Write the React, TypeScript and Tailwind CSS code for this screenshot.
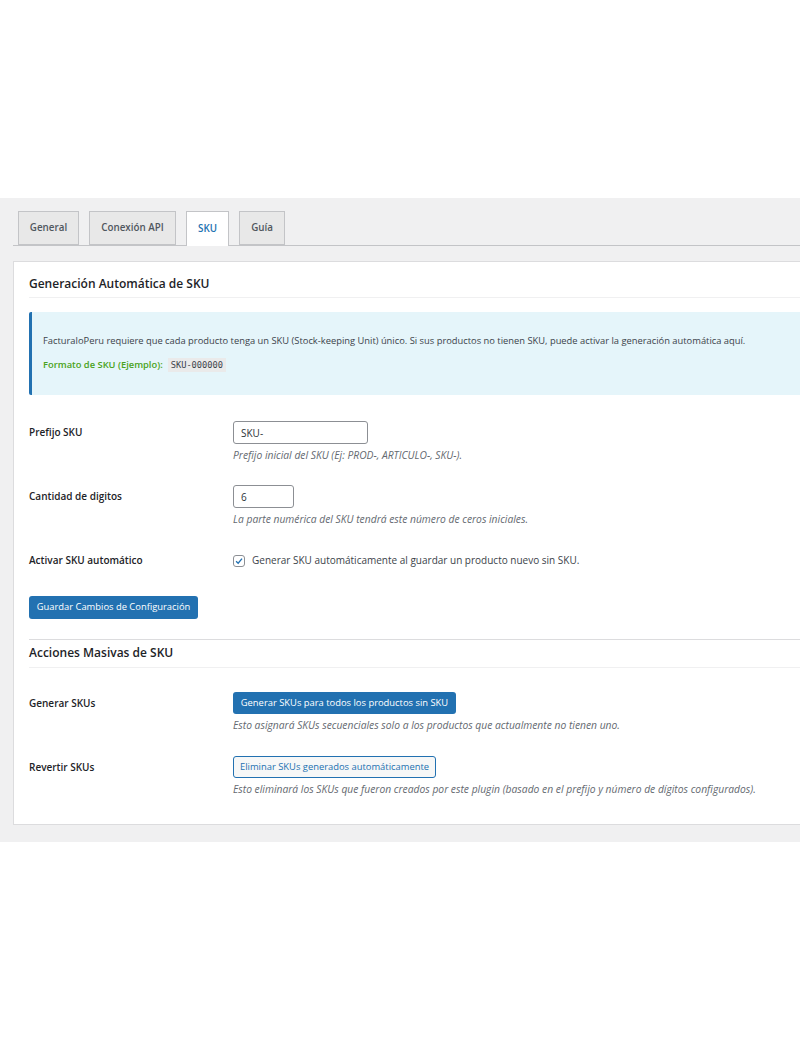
import { useState } from "react";

const tabs = [
  { name: "General", w: "w-[61px]" },
  { name: "Conexión API", w: "w-[87px]" },
  { name: "SKU", w: "w-[43px]" },
  { name: "Guía", w: "w-[46px]" },
];

function Row({ label, children }: { label: string; children: React.ReactNode }) {
  return (
    <div className="flex">
      <div className="w-[204px] shrink-0 h-[23px] flex items-center font-semibold text-[#1d2327]">{label}</div>
      <div className="flex flex-col items-start">{children}</div>
    </div>
  );
}

function Hint({ children }: { children: React.ReactNode }) {
  return <p className="mt-[4px] leading-[14px] italic text-[10.3px] text-[#646970]">{children}</p>;
}

export default function App() {
  const [auto, setAuto] = useState(true);

  return (
    <div className="w-[800px] overflow-hidden bg-white font-['Open_Sans',sans-serif] text-[10px] text-[#3c434a]">
      <div className="h-[198px]" />
      <div className="bg-[#f0f0f1] pt-[13px] pb-[17px] pl-[13px]">
        {/* tabs */}
        <div className="flex gap-[10px] pl-[5px] border-b border-[#c3c4c7] h-[35px] w-[820px]">
          {tabs.map((t) => {
            const active = t.name === "SKU";
            return (
              <div
                key={t.name}
                className={
                  active
                    ? `${t.w} h-[35px] flex items-center justify-center border border-b-0 border-[#c3c4c7] bg-white text-[#2271b1] font-semibold text-[9.8px]`
                    : `${t.w} h-[34px] flex items-center justify-center border border-[#c3c4c7] bg-[#e8e8e8] text-[#50575e] font-semibold text-[9.8px]`
                }
              >
                {t.name}
              </div>
            );
          })}
        </div>

        {/* settings card */}
        <div className="mt-[15px] w-[820px] bg-white border border-[#dcdcde] px-[15px] pb-[28px]">
          <h2 className="pt-[13px] pb-[4px] leading-[18px] text-[12px] font-semibold text-[#1d2327] border-b border-[#f0f0f1]">
            Generación Automática de SKU
          </h2>

          <div className="mt-[14px] h-[83px] bg-[#e5f5fa] border-l-[3px] border-[#2271b1] rounded-l-[2px] pl-[11px] pt-[22px] text-[9.35px]">
            <p className="leading-[14px]">
              FacturaloPeru requiere que cada producto tenga un SKU (Stock-keeping Unit) único. Si sus productos no
              tienen SKU, puede activar la generación automática aquí.
            </p>
            <p className="mt-[10px] flex items-center gap-[5px] leading-[14px]">
              <span className="font-semibold text-[#4aa320]">Formato de SKU (Ejemplo):</span>
              <code className="bg-[#eaeaea] px-[3px] font-['DejaVu_Sans_Mono',monospace] text-[8.7px] text-[#3c434a]">SKU-000000</code>
            </p>
          </div>

          <div className="mt-[26px] flex flex-col gap-[23px]">
            <Row label="Prefijo SKU">
              <input
                defaultValue="SKU-"
                className="w-[135px] h-[23px] px-[7px] border border-[#8c8f94] rounded-[3px] text-[10px] text-[#2c3338] outline-none"
              />
              <Hint>Prefijo inicial del SKU (Ej: PROD-, ARTICULO-, SKU-).</Hint>
            </Row>
            <Row label="Cantidad de digitos">
              <input
                defaultValue="6"
                className="w-[61px] h-[23px] px-[7px] border border-[#8c8f94] rounded-[3px] text-[10px] text-[#2c3338] outline-none"
              />
              <Hint>La parte numérica del SKU tendrá este número de ceros iniciales.</Hint>
            </Row>
          </div>

          <div className="mt-[23px] flex">
            <div className="w-[204px] shrink-0 h-[23px] flex items-center font-semibold text-[#1d2327]">
              Activar SKU automático
            </div>
            <label className="h-[23px] flex items-center gap-[7px] text-[#3c434a]">
              <span
                onClick={() => setAuto(!auto)}
                className="w-[12px] h-[12px] rounded-[3px] border border-[#8c8f94] bg-white flex items-center justify-center"
              >
                {auto && (
                  <svg viewBox="0 0 12 12" className="w-[10px] h-[10px]">
                    <path d="M2.5 6.2 L5 8.6 L9.6 3.2" fill="none" stroke="#2271b1" strokeWidth="1.6" />
                  </svg>
                )}
              </span>
              Generar SKU automáticamente al guardar un producto nuevo sin SKU.
            </label>
          </div>

          <button className="mt-[24px] h-[23px] w-[169px] rounded-[3px] bg-[#2271b1] text-white text-[9.4px] whitespace-nowrap">
            Guardar Cambios de Configuración
          </button>

          <h2 className="mt-[20px] border-t border-[#dcdcde] pt-[4px] pb-[5px] leading-[18px] text-[12px] font-semibold text-[#1d2327] border-b border-b-[#f0f0f1]">
            Acciones Masivas de SKU
          </h2>

          <div className="mt-[24px] flex flex-col gap-[24px]">
            <div className="flex">
              <div className="w-[204px] shrink-0 h-[22px] flex items-center font-semibold text-[#1d2327]">Generar SKUs</div>
              <div className="flex flex-col items-start">
                <button className="h-[22px] w-[223px] rounded-[3px] bg-[#2271b1] text-white text-[9.4px] whitespace-nowrap">
                  Generar SKUs para todos los productos sin SKU
                </button>
                <Hint>Esto asignará SKUs secuenciales solo a los productos que actualmente no tienen uno.</Hint>
              </div>
            </div>
            <div className="flex">
              <div className="w-[204px] shrink-0 h-[22px] flex items-center font-semibold text-[#1d2327]">Revertir SKUs</div>
              <div className="flex flex-col items-start">
                <button className="h-[22px] w-[203px] rounded-[3px] border border-[#2271b1] bg-[#f6f7f7] text-[#2271b1] text-[9.4px] whitespace-nowrap">
                  Eliminar SKUs generados automáticamente
                </button>
                <Hint>
                  Esto eliminará los SKUs que fueron creados por este plugin (basado en el prefijo y número de dígitos
                  configurados).
                </Hint>
              </div>
            </div>
          </div>
        </div>
      </div>
      <div className="h-[198px]" />
    </div>
  );
}
